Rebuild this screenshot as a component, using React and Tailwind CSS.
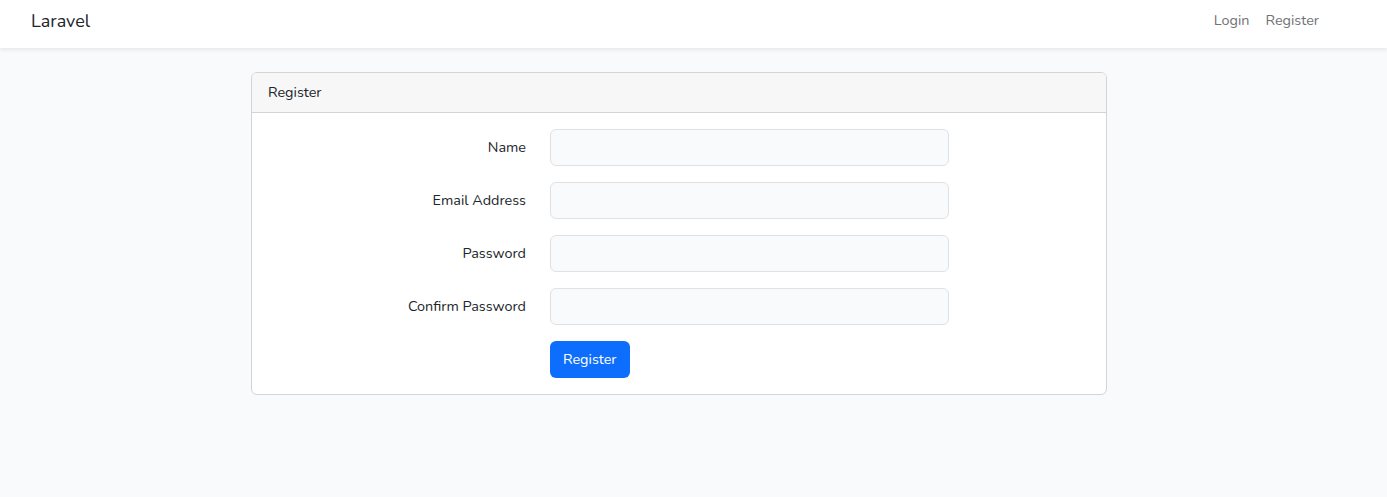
const fields = [
  { label: "Name", type: "text" },
  { label: "Email Address", type: "email" },
  { label: "Password", type: "password" },
  { label: "Confirm Password", type: "password" },
];

const FormRow = ({ label, type }) => (
  <div className="flex items-start">
    <label className="w-[282px] pt-[7px] pr-[24px] text-right leading-[23px]">
      {label}
    </label>
    <input
      type={type}
      className="w-[399px] h-[37px] px-3 rounded-[6px] border border-[#dee2e6] bg-[#f8fafc] outline-none"
    />
  </div>
);

export default function App() {
  return (
    <div className="min-h-screen bg-[#f8fafc] text-[#212529] text-[14.4px] font-['Nunito','Lato','Noto_Sans',sans-serif]">
      {/* Navbar */}
      <nav className="h-12 pb-[6px] bg-white shadow-[0_2px_4px_rgba(0,0,0,0.075)] flex items-center justify-between pl-[31px] pr-[60px]">
        <a className="text-[18px] text-[#212529]">Laravel</a>
        <div className="flex text-[#6f7275]">
          <a className="px-2">Login</a>
          <a className="px-2">Register</a>
        </div>
      </nav>

      <main className="pt-6">
        <div className="ml-[251px] w-[856px] bg-white border border-[#d3d4d5] rounded-[6px] overflow-hidden">
          <div className="h-10 px-4 flex items-center bg-[#f7f7f7] border-b border-[#d3d4d5]">
            Register
          </div>
          <div className="p-4 flex flex-col gap-4">
            {fields.map((f) => (
              <FormRow key={f.label} label={f.label} type={f.type} />
            ))}
            <div className="pl-[282px]">
              <button className="h-[37px] px-[13px] rounded-[6px] bg-[#0d6efd] text-white">
                Register
              </button>
            </div>
          </div>
        </div>
      </main>
    </div>
  );
}
